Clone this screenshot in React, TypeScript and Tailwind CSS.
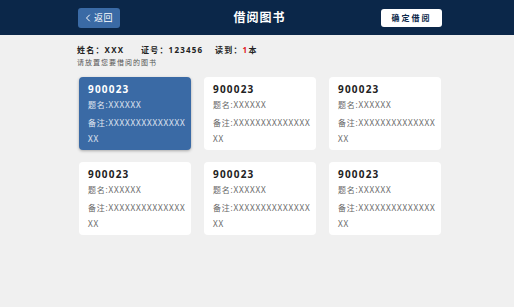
import { ChevronLeft } from "lucide-react";

const books = [
    { id: "900023", title: "XXXXXX", note: "XXXXXXXXXXXXXX", rest: "XX", active: true },
    { id: "900023", title: "XXXXXX", note: "XXXXXXXXXXXXXX", rest: "XX" },
    { id: "900023", title: "XXXXXX", note: "XXXXXXXXXXXXXX", rest: "XX" },
    { id: "900023", title: "XXXXXX", note: "XXXXXXXXXXXXXX", rest: "XX" },
    { id: "900023", title: "XXXXXX", note: "XXXXXXXXXXXXXX", rest: "XX" },
    { id: "900023", title: "XXXXXX", note: "XXXXXXXXXXXXXX", rest: "XX" },
];

function BookCard({
    id,
    title,
    note,
    rest,
    active,
}: {
    id: string;
    title: string;
    note: string;
    rest: string;
    active?: boolean;
}) {
    const body = active
        ? "whitespace-nowrap text-[8px] tracking-[0.8px] text-white/85"
        : "whitespace-nowrap text-[8px] tracking-[0.8px] text-[#666]";

    return (
        <div
            className={
                active
                    ? "h-[73px] rounded-[4px] bg-[#3a6aa5] pl-[9px] pr-[4px] pt-[5px] text-white shadow-[0_1px_3px_rgba(0,0,0,0.3)]"
                    : "h-[73px] rounded-[4px] bg-white pl-[9px] pr-[4px] pt-[5px] text-[#222]"
            }
        >
            <div className="text-[10px] font-bold leading-[14px] tracking-[1.2px]">{id}</div>
            <div className={`${body} mt-[2px] leading-[14px]`}>题名:{title}</div>
            <div className={`${body} mt-[4px] leading-[14px]`}>备注:{note}</div>
            <div className={`${body} mt-[2px] leading-[14px]`}>{rest}</div>
        </div>
    );
}

export default function App() {
    return (
        <div
            className="h-[307px] w-[514px] bg-[#f0f0f0]"
            style={{ fontFamily: '"Noto Sans", "Noto Sans CJK SC", sans-serif' }}
        >
            {/* Header */}
            <div className="grid h-[35px] grid-cols-[1fr_auto_1fr] items-center bg-[#0b2749]">
                <div className="pl-[78px]">
                    <button className="flex h-[20px] w-[42px] items-center justify-center rounded-[3px] bg-[#3a6aa5] text-[9px] text-white">
                        <ChevronLeft className="-ml-[3px] h-[12px] w-[12px]" strokeWidth={2} />
                        <span className="tracking-[0.5px]">返回</span>
                    </button>
                </div>
                <div className="pl-[5px] text-[12px] font-bold tracking-[1px] text-white">借阅图书</div>
                <div className="flex justify-end pr-[72px]">
                    <button className="h-[18px] w-[61px] rounded-[3px] bg-white text-[8px] font-bold tracking-[2px] text-[#0b2749]">
                        确定借阅
                    </button>
                </div>
            </div>

            {/* Reader info */}
            <div className="pl-[77px] pt-[8px]">
                <div className="flex h-[14px] items-center text-[8px] font-bold tracking-[1.2px] text-[#222]">
                    <span className="w-[64px] shrink-0">姓名：XXX</span>
                    <span className="w-[74px] shrink-0">证号：123456</span>
                    <span>
                        读到：<span className="text-[#e0161b]">1</span>本
                    </span>
                </div>
                <div className="text-[7px] leading-[12px] tracking-[1px] text-[#555]">
                    请放置您要借阅的图书
                </div>
            </div>

            {/* Books */}
            <div className="grid grid-cols-[112px_112px_112px] gap-x-[13px] gap-y-[12px] pl-[79px] pt-[8px]">
                {books.map((b, i) => (
                    <BookCard key={i} {...b} />
                ))}
            </div>
        </div>
    );
}
